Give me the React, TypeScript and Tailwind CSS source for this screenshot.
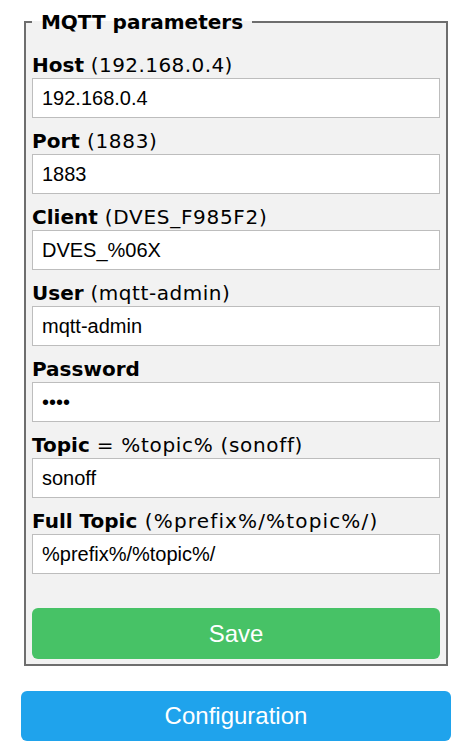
import React from "react";

const fields: { bold: string; rest: string; value: string; tr: string; password?: boolean }[] = [
  { bold: "Host", rest: " (192.168.0.4)", value: "192.168.0.4", tr: "tracking-[0.43px]" },
  { bold: "Port", rest: " (1883)", value: "1883", tr: "tracking-[0.7px]" },
  { bold: "Client", rest: " (DVES_F985F2)", value: "DVES_%06X", tr: "tracking-[0.7px]" },
  { bold: "User", rest: " (mqtt-admin)", value: "mqtt-admin", tr: "tracking-[0.55px]" },
  { bold: "Password", rest: "", value: "1234", tr: "tracking-normal", password: true },
  { bold: "Topic", rest: " = %topic% (sonoff)", value: "sonoff", tr: "tracking-[0.68px]" },
  { bold: "Full Topic", rest: " (%prefix%/%topic%/)", value: "%prefix%/%topic%/", tr: "tracking-[1.15px]" },
];

export default function App() {
  return (
    <div className="bg-white w-[459px] h-[750px] overflow-hidden pl-[21px]">
      <div className="w-[430px] pt-[10px]">
        <fieldset className="ml-[3px] w-[424px] border-2 border-solid border-[#6e6e6e] bg-[#f2f2f2] px-[6px] pt-[19px] pb-[5px] m-0">
          <legend className="px-[2px] font-bold text-[20px] leading-[24px] text-black [font-family:'DejaVu_Sans',Verdana,sans-serif]">
            {"\u00a0MQTT parameters\u00a0"}
          </legend>
          {fields.map((f) => (
            <div key={f.bold} className="pb-[11px]">
              <div className="h-[24px] text-[20px] leading-[24px] text-black whitespace-nowrap [font-family:'DejaVu_Sans',Verdana,sans-serif]">
                <b className="font-bold">{f.bold}</b>
                {f.rest && <span className={f.tr}>{f.rest}</span>}
              </div>
              <input
                readOnly
                type={f.password ? "password" : "text"}
                defaultValue={f.value}
                className="mt-[1px] block w-[408px] h-[40px] border border-solid border-[#bdbdbd] bg-white px-[9px] text-[20px] text-black outline-none [font-family:'Liberation_Sans',Arial,sans-serif]"
              />
            </div>
          ))}
          <div className="pt-[23px]">
            <button className="block w-[408px] h-[51px] rounded-[6px] bg-[#47c266] text-white text-[24px] [font-family:'Liberation_Sans',Arial,sans-serif]">
              Save
            </button>
          </div>
        </fieldset>
        <div className="pt-[25px]">
          <button className="block w-[430px] h-[50px] rounded-[6px] bg-[#1fa3ec] text-white text-[24px] [font-family:'Liberation_Sans',Arial,sans-serif]">
            Configuration
          </button>
        </div>
      </div>
    </div>
  );
}
